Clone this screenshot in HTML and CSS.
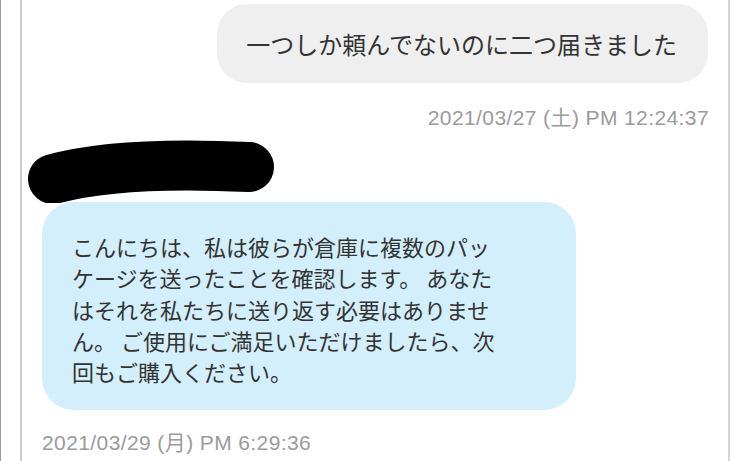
FILE: index.html
```html
<!DOCTYPE html>
<html lang="ja">
<head>
    <meta charset="UTF-8">
    <meta name="viewport" content="width=device-width, initial-scale=1.0">
    <title>Messages</title>
    <link rel="stylesheet" href="styles.css">
</head>
<body>
    <div class="thread">
        <!-- Outgoing message -->
        <div class="row row-out">
            <div class="bubble bubble-out">一つしか頼んでないのに二つ届きました</div>
        </div>
        <div class="stamp stamp-out">2021/03/27 (土) PM 12:24:37</div>

        <!-- Incoming message -->
        <div class="sender">
            <svg width="252" height="64" viewBox="0 0 252 64">
                <path d="M26 40 C 70 28, 140 24, 222 28" fill="none" stroke="#000" stroke-width="50" stroke-linecap="round"/>
            </svg>
        </div>
        <div class="row row-in">
            <div class="bubble bubble-in">こんにちは、私は彼らが倉庫に複数のパッ<br>ケージを送ったことを確認します。 あなた<br>はそれを私たちに送り返す必要はありませ<br>ん。 ご使用にご満足いただけましたら、次<br>回もご購入ください。</div>
        </div>
        <div class="stamp stamp-in">2021/03/29 (月) PM 6:29:36</div>
    </div>
</body>
</html>
```

FILE: styles.css
```css
html, body {
    margin: 0;
    height: 100%;
    background: #fff;
    overflow: hidden;
}

body {
    border-left: 1px solid #9a9a9a;
    font-family: "Liberation Sans", "Noto Sans CJK JP", sans-serif;
    color: #333;
}

.thread {
    margin-left: 19px;
    width: 710px;
    height: 461px;
    border-left: 2px solid #cbcbcb;
    border-right: 2px solid #d6d6d6;
    padding: 4px 20px 0 20px;
    box-sizing: border-box;
}

.row {
    display: flex;
}

.row-out {
    justify-content: flex-end;
}

.bubble {
    font-family: "Noto Sans CJK JP", sans-serif;
    white-space: nowrap;
}

.bubble-out {
    background: #efefef;
    border-radius: 30px;
    font-size: 24px;
    line-height: 31px;
    padding: 24px 31px 24px 29px;
}

.stamp {
    font-size: 21px;
    line-height: 24px;
    letter-spacing: 0.4px;
    color: #9b9b9b;
}

.stamp-out {
    text-align: right;
    margin-top: 23px;
    margin-right: -1px;
}

.sender {
    margin-left: -15px;
    margin-top: 9px;
    height: 63px;
}

.sender svg {
    display: block;
}

.bubble-in {
    background: #d3effb;
    border-radius: 32px;
    font-size: 22px;
    line-height: 31.25px;
    padding: 29px 0 23px 30px;
    width: 504px;
}

.stamp-in {
    margin-top: 21px;
}
```
